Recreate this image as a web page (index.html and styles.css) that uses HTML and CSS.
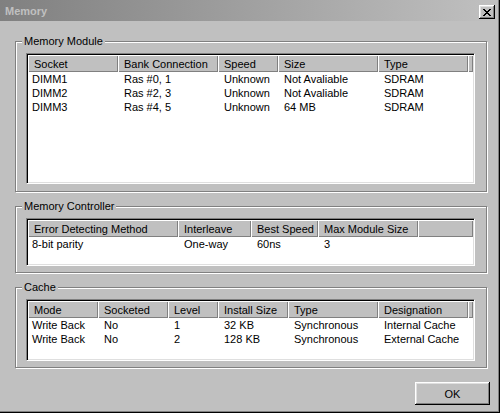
FILE: index.html
```html
<!DOCTYPE html>
<html lang="en">
<head>
    <meta charset="UTF-8">
    <title>Memory</title>
    <link rel="stylesheet" href="styles.css">
</head>
<body>
<div class="window">
    <div class="titlebar">
        <span class="title">Memory</span>
        <button class="close-button" aria-label="Close">
            <svg width="8" height="7" viewBox="0 0 8 7">
                <path d="M0 0h2v1h-2zM6 0h2v1h-2zM1 1h2v1h-2zM5 1h2v1h-2zM2 2h4v1h-4zM3 3h2v1h-2zM2 4h4v1h-4zM1 5h2v1h-2zM5 5h2v1h-2zM0 6h2v1h-2zM6 6h2v1h-2z" fill="#000"/>
            </svg>
        </button>
    </div>

    <div class="content">
        <div class="group group-module">
            <span class="group-label">Memory Module</span>
            <div class="list list-module">
                <table>
                    <colgroup>
                        <col style="width:90px"><col style="width:100px"><col style="width:60px"><col style="width:100px"><col style="width:90px"><col>
                    </colgroup>
                    <thead>
                    <tr><th>Socket</th><th>Bank Connection</th><th>Speed</th><th>Size</th><th>Type</th><th class="filler"></th></tr>
                    </thead>
                    <tbody>
                    <tr><td>DIMM1</td><td>Ras #0, 1</td><td>Unknown</td><td>Not Avaliable</td><td>SDRAM</td><td></td></tr>
                    <tr><td>DIMM2</td><td>Ras #2, 3</td><td>Unknown</td><td>Not Avaliable</td><td>SDRAM</td><td></td></tr>
                    <tr><td>DIMM3</td><td>Ras #4, 5</td><td>Unknown</td><td>64 MB</td><td>SDRAM</td><td></td></tr>
                    </tbody>
                </table>
            </div>
        </div>

        <div class="group group-controller">
            <span class="group-label">Memory Controller</span>
            <div class="list list-controller">
                <table>
                    <colgroup>
                        <col style="width:150px"><col style="width:73px"><col style="width:67px"><col style="width:100px"><col>
                    </colgroup>
                    <thead>
                    <tr><th>Error Detecting Method</th><th>Interleave</th><th>Best Speed</th><th>Max Module Size</th><th class="filler"></th></tr>
                    </thead>
                    <tbody>
                    <tr><td>8-bit parity</td><td>One-way</td><td>60ns</td><td>3</td><td></td></tr>
                    </tbody>
                </table>
            </div>
        </div>

        <div class="group group-cache">
            <span class="group-label">Cache</span>
            <div class="list list-cache">
                <table>
                    <colgroup>
                        <col style="width:70px"><col style="width:70px"><col style="width:50px"><col style="width:70px"><col style="width:90px"><col style="width:90px"><col>
                    </colgroup>
                    <thead>
                    <tr><th>Mode</th><th>Socketed</th><th>Level</th><th>Install Size</th><th>Type</th><th>Designation</th><th class="filler"></th></tr>
                    </thead>
                    <tbody>
                    <tr><td>Write Back</td><td>No</td><td>1</td><td>32 KB</td><td>Synchronous</td><td>Internal Cache</td><td></td></tr>
                    <tr><td>Write Back</td><td>No</td><td>2</td><td>128 KB</td><td>Synchronous</td><td>External Cache</td><td></td></tr>
                    </tbody>
                </table>
            </div>
        </div>

        <div class="actions">
            <button class="ok-button">OK</button>
        </div>
    </div>
</div>
</body>
</html>
```

FILE: styles.css
```css
/* Win98 style dialog */
body {
    margin: 0;
    background: #C0C0C0;
    font-family: 'Liberation Sans', Arial, sans-serif;
    font-size: 11px;
    color: #000000;
}

.window {
    box-sizing: border-box;
    width: 500px;
    height: 413px;
    background: #C0C0C0;
    border-right: 1px solid #000000;
    border-bottom: 1px solid #000000;
    box-shadow: inset -1px -1px 0 #808080;
    padding-right: 3px;
}

.titlebar {
    display: flex;
    justify-content: space-between;
    align-items: flex-end;
    height: 21px;
    padding: 0 1px 2px 5px;
    box-sizing: border-box;
    background: linear-gradient(to right, #808080, #C0C0C0);
}

.title {
    font-weight: bold;
    color: #C0C0C0;
    line-height: 14px;
    padding-bottom: 1px;
}

.close-button {
    width: 16px;
    height: 14px;
    padding: 0;
    display: flex;
    align-items: center;
    justify-content: center;
    background: #C0C0C0;
    border: none;
    box-shadow: inset -1px -1px 0 #000000, inset 1px 1px 0 #FFFFFF, inset -2px -2px 0 #808080, inset 2px 2px 0 #DFDFDF;
}

.content {
    padding: 20px 0 0 15px;
}

.group {
    position: relative;
    box-sizing: border-box;
    width: 472px;
    padding: 11px 11px 0 10px;
    border: 1px solid #808080;
    box-shadow: 1px 1px 0 #FFFFFF, inset 1px 1px 0 #FFFFFF;
    margin-bottom: 14px;
}

.group-module {
    height: 151px;
}

.group-controller {
    height: 67px;
}

.group-cache {
    height: 81px;
}

.group-label {
    position: absolute;
    top: -7px;
    left: 6px;
    padding: 0 2px;
    line-height: 13px;
    background: #C0C0C0;
}

.list {
    box-sizing: border-box;
    width: 449px;
    background: #FFFFFF;
    border: 1px solid;
    border-color: #808080 #FFFFFF #FFFFFF #808080;
    box-shadow: inset 1px 1px 0 #000000, inset -1px -1px 0 #DFDFDF;
    padding: 1px;
    overflow: hidden;
}

.list-module {
    height: 131px;
}

.list-controller {
    height: 48px;
}

.list-cache {
    height: 62px;
}

.list table {
    width: 445px;
    table-layout: fixed;
    border-collapse: collapse;
    border-spacing: 0;
}

.list th {
    height: 17px;
    padding: 0 0 0 6px;
    text-align: left;
    font-weight: normal;
    white-space: nowrap;
    overflow: hidden;
    background: #C0C0C0;
    box-shadow: inset 1px 1px 0 #FFFFFF, inset -1px -1px 0 #808080;
}

.list th.filler {
    padding: 0;
}

.list td {
    height: 14px;
    line-height: 14px;
    padding: 0 0 0 6px;
    white-space: nowrap;
    overflow: hidden;
}

.list td:first-child {
    padding-left: 4px;
}

.actions {
    display: flex;
    justify-content: flex-end;
    padding-right: 6px;
}

.ok-button {
    width: 75px;
    height: 23px;
    padding: 0;
    font-family: 'Liberation Sans', Arial, sans-serif;
    font-size: 11px;
    color: #000000;
    background: #C0C0C0;
    border: none;
    box-shadow: inset -1px -1px 0 #000000, inset 1px 1px 0 #FFFFFF, inset -2px -2px 0 #808080, inset 2px 2px 0 #DFDFDF;
}
```
